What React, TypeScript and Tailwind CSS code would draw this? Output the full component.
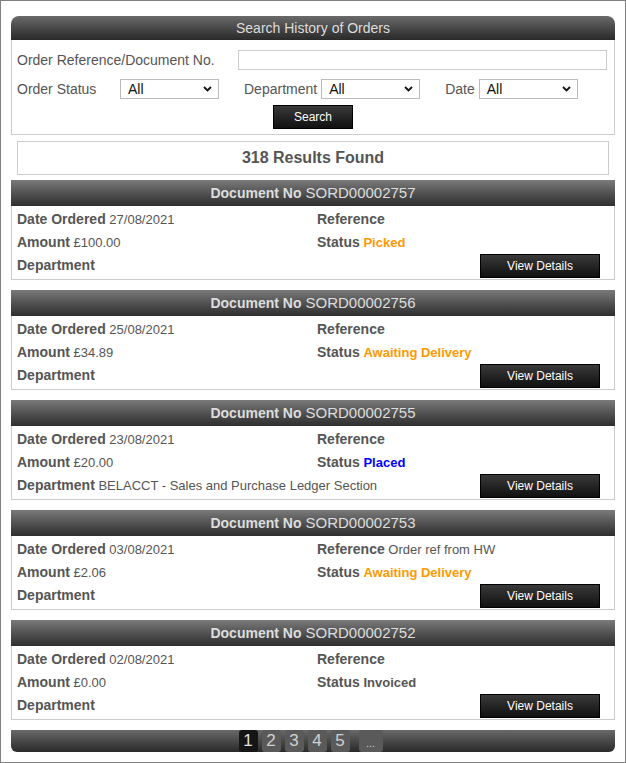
import React from "react";

type Order = {
  doc: string;
  date: string;
  amount: string;
  reference: string;
  status: string;
  statusClass: string;
  department: string;
};

const orders: Order[] = [
  { doc: "SORD00002757", date: "27/08/2021", amount: "£100.00", reference: "", status: "Picked", statusClass: "text-[#ff9900]", department: "" },
  { doc: "SORD00002756", date: "25/08/2021", amount: "£34.89", reference: "", status: "Awaiting Delivery", statusClass: "text-[#ff9900]", department: "" },
  { doc: "SORD00002755", date: "23/08/2021", amount: "£20.00", reference: "", status: "Placed", statusClass: "text-[#0000ff]", department: "BELACCT - Sales and Purchase Ledger Section" },
  { doc: "SORD00002753", date: "03/08/2021", amount: "£2.06", reference: "Order ref from HW", status: "Awaiting Delivery", statusClass: "text-[#ff9900]", department: "" },
  { doc: "SORD00002752", date: "02/08/2021", amount: "£0.00", reference: "", status: "Invoiced", statusClass: "text-[#555555]", department: "" },
];

function Chevron() {
  return (
    <svg width="9" height="6" viewBox="0 0 9 6" className="shrink-0">
      <path d="M1 1 L4.5 4.5 L8 1" fill="none" stroke="#111" strokeWidth="1.8" />
    </svg>
  );
}

function FakeSelect() {
  return (
    <div className="flex h-[20px] w-[99px] items-center justify-between border border-[#bbbbbb] bg-white pl-[7px] pr-[6px] text-[14px] text-[#111]">
      <span>All</span>
      <Chevron />
    </div>
  );
}

function Label({ children }: { children: React.ReactNode }) {
  return <span className="text-[14px] font-bold">{children}</span>;
}

function Card({ o }: { o: Order }) {
  return (
    <div className="mt-[10px] first:mt-[5px]">
      <div className="flex h-[26px] items-center justify-center bg-gradient-to-b from-[#7a7a7a] to-[#2e2e2e] text-[#dddddd]">
        <span className="text-[14px] font-bold">Document No</span>
        <span className="ml-[4px] text-[15px]">{o.doc}</span>
      </div>
      <div className="border-x border-b border-[#cccccc] pb-[2px] pl-[5px] pr-[14px] pt-[2px] text-[13px] text-[#555555]">
        <div className="flex h-[23px] items-center">
          <div className="w-[300px]">
            <Label>Date Ordered</Label> {o.date}
          </div>
          <div>
            <Label>Reference</Label>
            {o.reference ? " " + o.reference : ""}
          </div>
        </div>
        <div className="flex h-[23px] items-center">
          <div className="w-[300px]">
            <Label>Amount</Label> {o.amount}
          </div>
          <div>
            <Label>Status</Label>{" "}
            <span className={"font-bold " + o.statusClass}>{o.status}</span>
          </div>
        </div>
        <div className="flex h-[23px] items-center justify-between">
          <div>
            <Label>Department</Label>
            {o.department ? " " + o.department : ""}
          </div>
          <div className="flex h-[24px] w-[120px] items-center justify-center border border-black bg-gradient-to-b from-[#3a3a3a] to-[#111111] text-[12px] text-white">
            View Details
          </div>
        </div>
      </div>
    </div>
  );
}

export default function App() {
  return (
    <div className="box-border h-[763px] w-[626px] border border-[#808080] bg-white px-[10px] pt-[15px] font-['Liberation_Sans',Arial,sans-serif]">
      {/* Search panel */}
      <div className="flex h-[24px] items-center justify-center rounded-t-[8px] bg-gradient-to-b from-[#6a6a6a] to-[#2a2a2a] text-[14px] text-[#dddddd]">
        Search History of Orders
      </div>
      <div className="border-x border-b border-[#cccccc] pb-[5px] pl-[5px] pr-[7px] pt-[10px] text-[14px] text-[#555555]">
        <div className="flex h-[20px] items-center">
          <div className="w-[221px]">Order Reference/Document No.</div>
          <div className="h-[20px] flex-1 border border-[#cccccc] bg-white" />
        </div>
        <div className="mt-[9px] flex h-[20px] items-center">
          <div className="w-[103px]">Order Status</div>
          <FakeSelect />
          <div className="ml-[25px] mr-[4px]">Department</div>
          <FakeSelect />
          <div className="ml-[25px] mr-[4px]">Date</div>
          <FakeSelect />
        </div>
        <div className="mt-[6px] flex justify-center pl-[2px]">
          <div className="flex h-[24px] w-[80px] items-center justify-center border border-black bg-gradient-to-b from-[#3a3a3a] to-[#111111] text-[12px] text-white">
            Search
          </div>
        </div>
      </div>

      {/* Results */}
      <div className="mx-[6px] mt-[6px] flex h-[34px] items-center justify-center border border-[#cccccc] text-[16px] font-bold text-[#555555]">
        318 Results Found
      </div>

      <div>
        {orders.map((o) => (
          <Card key={o.doc} o={o} />
        ))}
      </div>

      {/* Pagination */}
      <div className="mt-[10px] flex h-[22px] items-stretch justify-center gap-[4px] rounded-b-[6px] bg-gradient-to-b from-[#6a6a6a] to-[#2a2a2a] pr-[5px]">
        <div className="flex w-[19px] items-center justify-center rounded-[3px] bg-[#151515] text-[17px] text-[#e0e0e0]">1</div>
        {["2", "3", "4", "5"].map((n) => (
          <div key={n} className="flex w-[19px] items-center justify-center rounded-[3px] bg-[#5a5a5a] text-[17px] text-[#d0d0d0]">
            {n}
          </div>
        ))}
        <div className="ml-[5px] flex w-[24px] items-end justify-center rounded-[3px] bg-[#5a5a5a] pb-[3px] text-[11px] leading-none text-[#cccccc]">
          ...
        </div>
      </div>
    </div>
  );
}
